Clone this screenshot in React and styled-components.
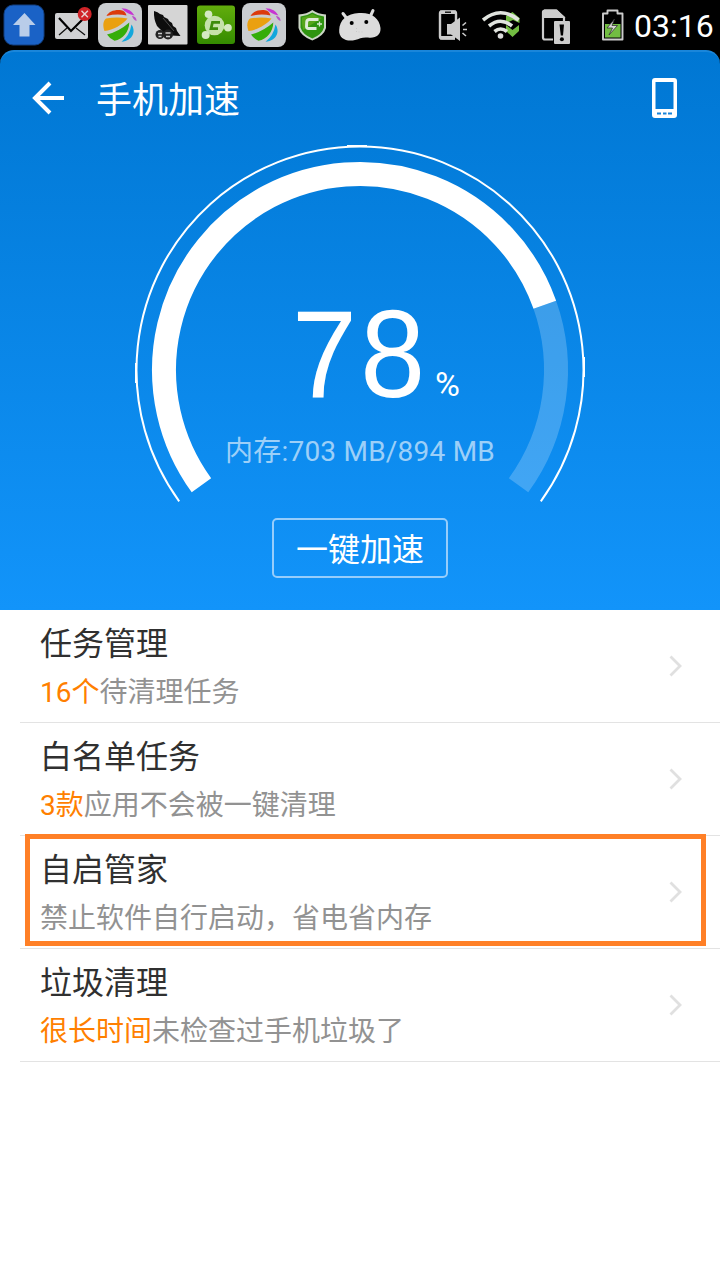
import React from "react";
import styled, { createGlobalStyle } from "styled-components";

const GlobalStyle = createGlobalStyle`
  * { box-sizing: border-box; }
  body { margin: 0; background: #fff; }
`;

const Screen = styled.main`
  display: flex;
  flex-direction: column;
  width: 720px;
  height: 1280px;
  overflow: hidden;
  background: #fff;
  font-family: Roboto, "Noto Sans CJK SC", sans-serif;
`;

const TopArea = styled.div`
  background: #000;
`;

const StatusBar = styled.header`
  display: flex;
  align-items: center;
  height: 50px;
  padding-left: 3px;
`;

const StatusIcon = styled.svg`
  flex: none;
  display: block;
  margin-left: ${(p) => p.$gap || 0}px;
`;

const Clock = styled.time`
  margin-left: 10px;
  color: #fff;
  font-size: 32px;
  line-height: 50px;
  white-space: nowrap;
  padding-top: 2px;
`;

const Hero = styled.section`
  display: flex;
  flex-direction: column;
  align-items: center;
  height: 560px;
  border-top: 2px solid #1a86da;
  border-radius: 14px 14px 0 0;
  background: linear-gradient(#0077d3, #1294fa);
`;

const TitleBar = styled.div`
  display: flex;
  align-items: center;
  align-self: stretch;
  height: 92px;
  padding: 0 42px 0 31px;
`;

const Title = styled.h1`
  flex: 1;
  margin: 0 0 0 31px;
  padding-top: 5px;
  color: #fff;
  font-size: 36px;
  font-weight: 400;
  line-height: 44px;
`;

const Gauge = styled.div`
  display: grid;
  width: 450px;
  height: 358px;
  > * { grid-area: 1 / 1; }
`;

const GaugeText = styled.div`
  display: flex;
  flex-direction: column;
  align-items: center;
  padding-top: 141px;
`;

const Reading = styled.div`
  display: flex;
  align-items: baseline;
  padding-left: 33px;
  color: #fff;
  line-height: 138px;
  height: 138px;
`;

const Percent = styled.strong`
  width: 138px;
  font-family: "Liberation Sans", sans-serif;
  font-size: 124px;
  font-weight: 400;
  letter-spacing: 3.6px;
  transform: scaleX(0.94);
  transform-origin: left;
`;

const Unit = styled.span`
  margin-left: 5px;
  padding-right: 1px;
  font-size: 34px;
  transform: translateY(-1px);
`;

const Memory = styled.div`
  margin-top: 9px;
  color: rgba(255, 255, 255, 0.6);
  font-size: 28px;
  font-weight: 400;
  letter-spacing: 0.22px;
  line-height: 40px;
  white-space: nowrap;
`;

const BoostButton = styled.button`
  width: 176px;
  height: 60px;
  margin-top: 16px;
  padding: 4px 0 0;
  border: 2px solid #96cdfb;
  border-radius: 5px;
  background: transparent;
  color: #fff;
  font-family: inherit;
  font-size: 32px;
  font-weight: 400;
  line-height: 52px;
`;

const List = styled.ul`
  margin: 0;
  padding: 0 0 0 20px;
  list-style: none;
`;

const Row = styled.li`
  position: relative;
  display: flex;
  align-items: center;
  justify-content: space-between;
  height: 113px;
  padding: 0 36px 0 20px;
  border-bottom: 1px solid #e3e3e3;
`;

const RowTitle = styled.h2`
  margin: 0;
  padding-top: 5px;
  color: #303030;
  font-size: 32px;
  font-weight: 400;
  line-height: 48px;
`;

const RowDetail = styled.p`
  margin: 0;
  color: #929292;
  font-size: 28px;
  line-height: 49px;
`;

const Accent = styled.span`
  color: #ff7f00;
`;

const Highlight = styled.div`
  position: absolute;
  inset: -2px 14px 2px 5px;
  border: 5px solid #ff8027;
`;

const UploadIcon = () => (
  <StatusIcon width="42" height="44" viewBox="3 3 42 44">
    <rect x="4" y="5" width="40" height="40" rx="9" fill="#1a62c6" stroke="#123f80" />
    <path d="M24.5 13L35.5 25H29.5V36.5H19.5V25H13Z" fill="#b9cde9" />
  </StatusIcon>
);

const MailIcon = () => (
  <StatusIcon $gap={9} width="40" height="44" viewBox="54 3 40 44">
    <rect x="55" y="13" width="33" height="26" rx="2" fill="#d0d1d3" />
    <path d="M59 35L67 28M85 35L76 28" stroke="#111" strokeWidth="1.3" />
    <path d="M59 18L71 31L84 18" fill="none" stroke="#000" strokeWidth="2.2" />
    <circle cx="84.7" cy="14" r="7" fill="#d02428" />
    <path d="M81.5 10.8L87.9 17.2M87.9 10.8L81.5 17.2" stroke="#e7d4d4" strokeWidth="1.4" />
  </StatusIcon>
);

const BallIcon = ({ gap }) => (
  <StatusIcon $gap={gap} width="44" height="44" viewBox="98 3 44 44">
    <rect x="98" y="3" width="44" height="44" rx="8" fill="#cacdd0" />
    <path d="M106.5 16C108.500 12 113 10 118.500 10C122 10 125.500 11 126.500 15.500Q117 13.500 106.500 16Z" fill="#dc3a0c" />
    <path d="M121.500 8.200Q131 8.500 134.500 15.500Q127 14 121.500 8.200Z" fill="#c735d2" />
    <path d="M132 15.700Q136.500 16.500 136.600 21Q133 19.500 132 15.700Z" fill="#b950c8" />
    <path d="M104.500 31C102.500 26 103 21 106 18.500Q117 16.500 127.500 18.500C123 24.500 113 30 104.500 31Z" fill="#eaa010" />
    <path d="M107 34.500Q119 31.500 129.300 22.500C129 32 123 39 114.500 40.800Q110 39 107 34.500Z" fill="#35ad08" />
    <path d="M131.500 24.500C136 31 133.500 40.500 121.500 41.700Q129.500 36 131.500 24.500Z" fill="#12a7dc" />
  </StatusIcon>
);

const FeatherIcon = () => (
  <StatusIcon $gap={5} width="42" height="44" viewBox="147 3 42 44">
    <rect x="148" y="5" width="39.5" height="39.5" rx="1" fill="#d5d5d5" />
    <path d="M154 11Q158 12 160 14L163 15L164 17L168 19L169 21L172 23L173 26L176 28L177 31L180.500 36L171 35.500L163 32L157 26Q153.500 19 154 11Z" fill="#0d0d0d" />
    <path d="M163 18L174 31" stroke="#777" strokeWidth=".6" />
    <circle cx="160" cy="34.500" r="4.500" fill="#222" />
    <circle cx="168" cy="34.500" r="5" fill="#222" />
    <path d="M158 33.500H162M158.500 36.500H161.500M165.500 33H170.500M166 36.500H170" stroke="#ccc" strokeWidth="1.300" />
  </StatusIcon>
);

const GreenIcon = () => (
  <StatusIcon $gap={7} width="41" height="44" viewBox="196 3 41 44">
    <defs>
      <linearGradient id="leaf" x2="0" y2="1">
        <stop stopColor="#62ad0c" /><stop offset="1" stopColor="#348b00" />
      </linearGradient>
    </defs>
    <rect x="197" y="5.5" width="38" height="38.500" rx="3" fill="url(#leaf)" />
    <path d="M208 14L214 25L206 35M214 25L227 28" fill="none" stroke="#cee8b3" strokeWidth="2.500" />
    <circle cx="214.500" cy="25.500" r="9.800" fill="#c5e1aa" />
    <g fill="#d5e9c2">
      <circle cx="208.500" cy="14.300" r="3.800" /><circle cx="228" cy="27.700" r="3.800" /><circle cx="205.700" cy="35" r="4" />
    </g>
    <path d="M220 22.300H212.500L211 28.700H218" fill="none" stroke="#3d8c0b" strokeWidth="2.800" />
  </StatusIcon>
);

const ShieldIcon = () => (
  <StatusIcon $gap={12} width="30" height="44" viewBox="298 3 30 44">
    <path d="M312.300 10Q318 14 326 14.500V28Q324 36 312.300 40.500Q300.500 36 298.500 28V14.500Q307 14 312.300 10Z" fill="#cbd6c5" />
    <path d="M312.300 12.500Q318 16 324 16.500V27.500Q322 34.500 312.300 38.500Q302.500 34.500 300.500 27.500V16.500Q307 16 312.300 12.500Z" fill="#2f9410" />
    <path d="M312.300 14Q317 17 322 18L303 30Q301.500 25 302 17.500Q308 17 312.300 14Z" fill="#66ae20" opacity=".7" />
    <path d="M318.500 19.500H309.500Q307 19.500 306.700 22L306.500 26.500Q306.500 28.500 308.500 28.500H316.500" fill="none" stroke="#dfebd8" strokeWidth="2.900" />
    <path d="M319.500 21.500V26.500M317 24H322" stroke="#d7ecd0" strokeWidth="1.300" />
  </StatusIcon>
);

const RobotIcon = () => (
  <StatusIcon $gap={10} width="45" height="44" viewBox="338 3 45 44">
    <path d="M343 13.500L348 20M373 10.500L370 17" stroke="#dcdcdc" strokeWidth="3" strokeLinecap="round" />
    <path d="M339.200 30C339.500 20 347 13.500 359 13C371 12 379.500 18 380.500 28C381 35 375.500 38.500 368 37.500C362 37 360 38.500 355 40C347 42.200 338.500 38.500 339.200 30Z" fill="#dcdcdc" />
    <circle cx="351.700" cy="23" r="2" /><circle cx="366.300" cy="22" r="2" />
    <path d="M356.500 28V34M358.500 32H364" stroke="#c9c9c9" strokeDasharray="1 2" />
  </StatusIcon>
);

const SpeakerPhoneIcon = () => (
  <StatusIcon $gap={55} width="30" height="44" viewBox="438 3 30 44">
    <path d="M455 38.500H442Q440 38.500 440 36.500V13.500Q440 11.500 442 11.500H454Q456 11.500 456 13.500V22" fill="none" stroke="#ccc" strokeWidth="2.400" />
    <path d="M440 10.500H456V14H440ZM440 36H455V39.500H440Z" fill="#ccc" />
    <path d="M445 12.200H451" stroke="#000" strokeWidth="1.300" />
    <path d="M447 24H451L460 17.500V41L451 34.500H447Z" fill="#ccc" />
    <path d="M462.500 25.500L466 22.500M463 29.500H467M462.500 33L466 36" stroke="#ccc" strokeWidth="1.600" />
  </StatusIcon>
);

const WifiIcon = () => (
  <StatusIcon $gap={14} width="39" height="44" viewBox="482 3 39 44">
    <path d="M506 16L512.500 12L519.500 18V23L513 20L506 23ZM506 25L512.500 30L519 25V31L512.500 37L506 31Z" fill="#72bd42" />
    <g fill="none" stroke="#e1e4df" strokeWidth="3.600">
      <path d="M483 20Q500.500 5.500 518.500 20" />
      <path d="M489 26Q500.500 16.500 512 26" />
      <path d="M494.500 31.500Q500.500 26.500 507 31.500" />
    </g>
    <circle cx="500.500" cy="36" r="2.800" fill="#ddd" />
  </StatusIcon>
);

const SimIcon = () => (
  <StatusIcon $gap={20} width="30" height="44" viewBox="541 3 30 44">
    <path d="M553 39.500H545Q543 39.500 543 37.500V12Q543 10.500 545 10.500H556L564 17.500V21" fill="none" stroke="#ccc" strokeWidth="2.200" />
    <path d="M544 9.500H557L565.500 18H544Z" fill="#ccc" />
    <rect x="554" y="21" width="16" height="23" rx="1" fill="#ccc" />
    <path d="M559.500 24.500H564L563 35.500H560.800Z" />
    <circle cx="561.900" cy="39.300" r="2" />
  </StatusIcon>
);

const BatteryIcon = () => (
  <StatusIcon $gap={31} width="22" height="44" viewBox="602 3 22 44">
    <path d="M603 13.500H607.500V10.500H617.500V13.500H622.500V39.500H603Z" fill="#000" stroke="#ccc" strokeWidth="1.900" strokeLinejoin="round" />
    <rect x="605" y="24" width="15.500" height="13.500" fill="#72bd42" />
    <path d="M614.500 19L607 28H612.500L609 35L617.500 25.500H612Z" fill="#d7d7d7" stroke="#333" strokeWidth=".8" />
  </StatusIcon>
);

const BackIcon = () => (
  <svg width="34" height="34" viewBox="31 81 34 34">
    <path d="M64 98H35M50 83L35 98L50 113" fill="none" stroke="#fff" strokeWidth="4" />
  </svg>
);

const DeviceIcon = () => (
  <svg width="26" height="40" viewBox="0 0 26 40">
    <path fillRule="evenodd" fill="#fff" d="M3 0H22Q25 0 25 3V37Q25 40 22 40H3Q0 40 0 37V3Q0 0 3 0ZM3.500 4V31H21.500V4Z" />
    <path d="M5 35.500H9M11 35.500H14.500M16 35.500H20" stroke="#1683da" strokeWidth="2" />
  </svg>
);

const Chevron = () => (
  <svg width="16" height="24" viewBox="0 0 16 24">
    <path d="M2.500 2.500L12 12L2.500 21.500" fill="none" stroke="#e0e0e0" strokeWidth="2.800" />
  </svg>
);

const SWEEP = 252;
const START = 144;
const point = (radius, degrees) => {
  const angle = (degrees * Math.PI) / 180;
  return `${225 + radius * Math.cos(angle)} ${226 + radius * Math.sin(angle)}`;
};
const arc = (radius, from, to) =>
  `M${point(radius, from)}A${radius} ${radius} 0 ${to - from > 180 ? 1 : 0} 1 ${point(radius, to)}`;

const Dial = ({ value }) => {
  const split = START + (SWEEP * value) / 100;
  return (
    <svg width="450" height="358" viewBox="0 0 450 358" fill="none" stroke="#fff">
      <path d={arc(223.5, START, START + SWEEP)} strokeWidth="2" />
      <path d="M212 2H232M1 219V239M449 213V233" strokeWidth="2" />
      <path d={arc(196, START, split)} strokeWidth="24" />
      <path d={arc(196, split, START + SWEEP)} strokeWidth="24" strokeOpacity=".21" />
    </svg>
  );
};

const items = [
  { title: "任务管理", accent: "16个", detail: "待清理任务" },
  { title: "白名单任务", accent: "3款", detail: "应用不会被一键清理" },
  { title: "自启管家", detail: "禁止软件自行启动，省电省内存", highlighted: true },
  { title: "垃圾清理", accent: "很长时间", detail: "未检查过手机垃圾了" },
];

export default function App() {
  return (
    <Screen lang="zh-CN">
      <GlobalStyle />
      <TopArea>
        <StatusBar>
          <UploadIcon />
          <MailIcon />
          <BallIcon gap={4} />
          <FeatherIcon />
          <GreenIcon />
          <BallIcon gap={5} />
          <ShieldIcon />
          <RobotIcon />
          <SpeakerPhoneIcon />
          <WifiIcon />
          <SimIcon />
          <BatteryIcon />
          <Clock>03:16</Clock>
        </StatusBar>
        <Hero>
          <TitleBar>
            <BackIcon />
            <Title>手机加速</Title>
            <DeviceIcon />
          </TitleBar>
          <Gauge>
            <Dial value={78} />
            <GaugeText>
              <Reading>
                <Percent>78</Percent>
                <Unit>%</Unit>
              </Reading>
              <Memory>内存:703 MB/894 MB</Memory>
            </GaugeText>
          </Gauge>
          <BoostButton>一键加速</BoostButton>
        </Hero>
      </TopArea>
      <List>
        {items.map((item) => (
          <Row key={item.title}>
            <div>
              <RowTitle>{item.title}</RowTitle>
              <RowDetail>
                {item.accent && <Accent>{item.accent}</Accent>}
                {item.detail}
              </RowDetail>
            </div>
            <Chevron />
            {item.highlighted && <Highlight />}
          </Row>
        ))}
      </List>
    </Screen>
  );
}
